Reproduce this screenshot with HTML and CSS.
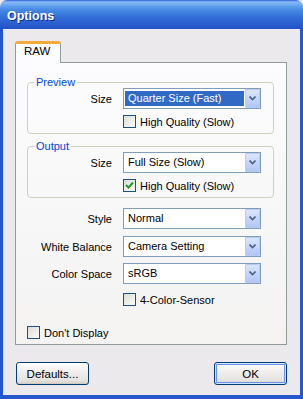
FILE: index.html
```html
<!DOCTYPE html>
<html lang="en">
<head>
  <meta charset="UTF-8" />
  <title>Options</title>
  <link rel="stylesheet" href="styles.css">
</head>
<body>
  <div class="window">
    <div class="titlebar"><span>Options</span></div>
    <div class="frame">
      <div class="tabs">
        <div class="tab">RAW</div>
      </div>
      <div class="panel">
        <fieldset class="group">
          <legend>Preview</legend>
          <div class="row">
            <label class="lbl">Size</label>
            <div class="combo"><span class="value picked">Quarter Size (Fast)</span><span class="drop"><svg width="7" height="5" viewBox="0 0 7 5"><path d="M0.5 0.5 L3.5 3.5 L6.5 0.5" fill="none" stroke="#4d6185" stroke-width="1.6"/></svg></span></div>
          </div>
          <div class="row check-row">
            <span class="check"></span><span>High Quality (Slow)</span>
          </div>
        </fieldset>

        <fieldset class="group out">
          <legend>Output</legend>
          <div class="row">
            <label class="lbl">Size</label>
            <div class="combo"><span class="value">Full Size (Slow)</span><span class="drop"><svg width="7" height="5" viewBox="0 0 7 5"><path d="M0.5 0.5 L3.5 3.5 L6.5 0.5" fill="none" stroke="#4d6185" stroke-width="1.6"/></svg></span></div>
          </div>
          <div class="row check-row">
            <span class="check on"><svg width="9" height="9" viewBox="0 0 9 9"><path d="M1 4 L3.5 6.5 L8 1.5" fill="none" stroke="#21a121" stroke-width="2"/></svg></span><span>High Quality (Slow)</span>
          </div>
        </fieldset>

        <div class="row first">
          <label class="lbl">Style</label>
          <div class="combo"><span class="value">Normal</span><span class="drop"><svg width="7" height="5" viewBox="0 0 7 5"><path d="M0.5 0.5 L3.5 3.5 L6.5 0.5" fill="none" stroke="#4d6185" stroke-width="1.6"/></svg></span></div>
        </div>
        <div class="row wb">
          <label class="lbl">White Balance</label>
          <div class="combo"><span class="value">Camera Setting</span><span class="drop"><svg width="7" height="5" viewBox="0 0 7 5"><path d="M0.5 0.5 L3.5 3.5 L6.5 0.5" fill="none" stroke="#4d6185" stroke-width="1.6"/></svg></span></div>
        </div>
        <div class="row cs">
          <label class="lbl">Color Space</label>
          <div class="combo"><span class="value">sRGB</span><span class="drop"><svg width="7" height="5" viewBox="0 0 7 5"><path d="M0.5 0.5 L3.5 3.5 L6.5 0.5" fill="none" stroke="#4d6185" stroke-width="1.6"/></svg></span></div>
        </div>
        <div class="row check-row sensor">
          <span class="check"></span><span>4-Color-Sensor</span>
        </div>
        <div class="row check-row nodisplay">
          <span class="check"></span><span>Don't Display</span>
        </div>
      </div>

      <div class="buttons">
        <button class="btn">Defaults...</button>
        <button class="btn default">OK</button>
      </div>
    </div>
  </div>
</body>
</html>
```

FILE: styles.css
```css
* { margin: 0; padding: 0; box-sizing: border-box; }
body {
  background: #ece9ec;
  font-family: "Liberation Sans", Arial, sans-serif;
  font-size: 11px;
  color: #000;
}
.window {
  width: 303px;
  height: 399px;
  display: flex;
  flex-direction: column;
}
.titlebar {
  height: 29px;
  border-radius: 7px 7px 0 0;
  background: linear-gradient(#2a5fd8 0px, #8cbdf5 2px, #6aa6ee 5px, #4589e4 10px, #336fd9 17px, #2a5ece 24px, #2251c3 29px);
  color: #fff;
  font-weight: bold;
  font-size: 12.5px;
  padding: 2px 0 0 7px;
  display: flex;
  align-items: center;
  text-shadow: 1px 1px 0 #0d2a86;
}
.frame {
  flex: 1;
  background: #ece9ec;
  border: 3px solid #2556cc;
  border-top: 0;
  border-bottom-width: 4px;
  padding: 12px 13px 0 12px;
}
.tabs { display: flex; }
.tab {
  width: 46px;
  height: 22px;
  margin-bottom: -1px;
  position: relative;
  z-index: 1;
  background: #fcfcfe;
  border: 1px solid #919b9c;
  border-bottom: 0;
  border-top: 3px solid #f5a938;
  border-radius: 3px 3px 0 0;
  padding: 1px 0 0 8px;
  font-size: 11.5px;
}
.panel {
  height: 283px;
  border: 1px solid #919b9c;
  background: linear-gradient(#fcfcfe, #f4f3f2);
  padding: 12px 12px 0 11px;
}
.group {
  border: 1px solid #d0d0bf;
  border-radius: 4px;
  padding: 0 0 5px 0;
}
.group legend {
  color: #0046d5;
  margin-left: 6px;
  padding: 0 2px;
  line-height: 14px;
  font-size: 11px;
}
.group.out { margin-top: 5px; }
.row {
  display: flex;
  align-items: center;
  height: 21px;
}
.group .row:first-of-type { margin-top: -1px; }
.lbl {
  width: 85px;
  margin-right: 11px;
  text-align: right;
}
.group .lbl { width: 84px; }
.combo {
  width: 138px;
  height: 21px;
  border: 1px solid #7f9db9;
  background: #fff;
  display: flex;
}
.value {
  flex: 1;
  padding: 0 0 0 3px;
  margin: 2px 1px 2px 1px;
  line-height: 15px;
}
.value.picked {
  background: #316ac5;
  color: #fff;
}
.drop {
  width: 15px;
  height: 19px;
  border: 1px solid #b8cbf3;
  border-radius: 1px;
  background: linear-gradient(#dbe6fd, #c1d3fb 60%, #b1c6f6);
  display: flex;
  align-items: center;
  justify-content: center;
}
.check-row {
  height: 13px;
  margin-top: 6px;
  padding-left: 95px;
}
.check {
  width: 13px;
  height: 13px;
  border: 1px solid #1c5180;
  background: linear-gradient(135deg, #dcdcd7, #fbfbf9);
  margin-right: 4px;
  display: flex;
  align-items: center;
  justify-content: center;
}
.row.first { margin-top: 10px; }
.row.wb { margin-top: 7px; }
.row.cs { margin-top: 6px; }
.check-row.sensor { margin-top: 9px; padding-left: 96px; }
.check-row.nodisplay { margin-top: 20px; padding-left: 0; }
.buttons {
  display: flex;
  justify-content: space-between;
  margin-top: 17px;
  padding: 0 0 0 1px;
}
.btn {
  width: 73px;
  height: 23px;
  border: 1px solid #003c74;
  border-radius: 3px;
  background: linear-gradient(#ffffff, #f1efee 40%, #e6e4e2 80%, #d6d0c5);
  font-family: "Liberation Sans", Arial, sans-serif;
  font-size: 11.5px;
  color: #000;
  box-shadow: inset 0 -1px 0 #d0ccc4;
}
.btn.default {
  box-shadow: inset 0 0 0 1px #cee7ff, inset 0 0 0 2px #6d8ff0;
}
```
